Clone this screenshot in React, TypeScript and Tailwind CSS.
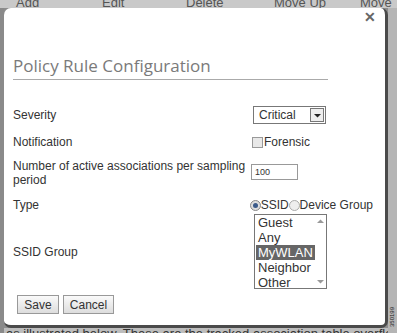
import React from "react";

// ポリシールール設定ダイアログ

const font = { fontFamily: "Tahoma, 'Liberation Sans', Arial, sans-serif" };

function Arrow({ up, color = "#999" }: { up: boolean; color?: string }) {
    return (
        <svg width="7" height="5" viewBox="0 0 7 5">
            <path d={up ? "M0 4 L3.5 0.5 L7 4 Z" : "M0 1 L3.5 4.5 L7 1 Z"} fill={color} />
        </svg>
    );
}

export default function App() {
    const groups = ["Guest", "Any", "MyWLAN", "Neighbor", "Other"];
    return (
        <div className="w-[397px] h-[333px] overflow-hidden bg-[#8d8d8d] flex flex-col" style={font}>
            <div className="h-[8px] bg-[#c9c9c9] flex text-[13px] leading-[10px] text-[#555] overflow-hidden items-end whitespace-nowrap">
                <span className="pl-[16px] w-[70px]">Add</span>
                <span className="w-[90px] pl-[32px]">Edit</span>
                <span className="w-[88px] pl-[26px]">Delete</span>
                <span className="w-[92px] pl-[26px]">Move Up</span>
                <span className="pl-[20px]">Move</span>
            </div>
            <div className="flex-1 flex min-h-0">
                <div className="w-[4px] bg-[#8a8a8a]" />
                <div className="w-[384px] flex flex-col">
                    <div className="h-[320px] bg-white rounded-[7px] border-r-[3px] border-b-[3px] border-[#4a4a4a] flex flex-col pl-[9px] pr-[12px] text-[12px] text-[#333] whitespace-nowrap">
                        <div className="flex justify-end pt-[1px] -mr-[3px]">
                            <span className="text-[14px] font-bold text-[#666] leading-[16px]">✕</span>
                        </div>
                        <div className="mt-[30px] w-[315px] border-b border-[#aaa] pb-[2px] text-[17px] text-[#7a7a7a] leading-[22px]" style={{ fontFamily: "'Open Sans', 'Noto Sans', sans-serif" }}>
                            Policy Rule Configuration
                        </div>
                        <div className="mt-[26px] flex items-center h-[18px]">
                            <span className="w-[240px]">Severity</span>
                            <div className="flex items-center border border-[#777] h-[18px] w-[73px]">
                                <span className="flex-1 pl-[5px]">Critical</span>
                                <span className="w-[14px] h-[14px] mr-[1px] border border-[#777] bg-[#eee] flex items-center justify-center">
                                    <Arrow up={false} color="#222" />
                                </span>
                            </div>
                        </div>
                        <div className="mt-[9px] flex items-center h-[18px]">
                            <span className="w-[239px]">Notification</span>
                            <span className="w-[11px] h-[11px] border border-[#999] bg-[#e8e8e8]" />
                            <span className="pl-[1px]">Forensic</span>
                        </div>
                        <div className="mt-[8px] flex items-start">
                            <span className="w-[238px] leading-[14px] whitespace-normal">Number of active associations per sampling period</span>
                            <span className="mt-[5px] w-[47px] h-[16px] border border-[#999] text-[9px] leading-[14px] pl-[3px]">100</span>
                        </div>
                        <div className="mt-[9px] flex items-center h-[18px]">
                            <span className="w-[240px]">Type</span>
                            <span className="w-[11px] h-[11px] rounded-full border border-[#888] bg-[#ddd] flex items-center justify-center">
                                <span className="w-[5px] h-[5px] rounded-full bg-[#3a5a8a]" />
                            </span>
                            <span>SSID</span>
                            <span className="w-[11px] h-[11px] rounded-full border border-[#aaa] bg-[#eee]" />
                            <span>Device Group</span>
                        </div>
                        <div className="flex items-center">
                            <span className="w-[241px]">SSID Group</span>
                            <div className="w-[73px] h-[75px] border border-[#777] flex">
                                <div className="flex-1 flex flex-col text-[13px] leading-[15px] pl-[1px]">
                                    {groups.map((g) => (
                                        <span key={g} className={g === "MyWLAN" ? "bg-[#666] text-white px-[2px]" : "px-[2px]"}>{g}</span>
                                    ))}
                                </div>
                                <div className="w-[15px] flex flex-col justify-between items-center py-[4px]">
                                    <Arrow up />
                                    <Arrow up={false} />
                                </div>
                            </div>
                        </div>
                        <div className="mt-[6px] flex gap-[4px] pl-[4px]">
                            <button className="h-[19px] w-[42px] border border-[#999] bg-gradient-to-b from-[#fafafa] to-[#ddd] text-[12px] text-[#333]">Save</button>
                            <button className="h-[19px] w-[51px] border border-[#999] bg-gradient-to-b from-[#fafafa] to-[#ddd] text-[12px] text-[#333]">Cancel</button>
                        </div>
                    </div>
                    <div className="flex-1 overflow-hidden bg-[#bdbdbd] text-[13px] leading-[12px] text-[#333] whitespace-nowrap pl-[2px]">
                        as illustrated below. These are the tracked association table overflows
                    </div>
                </div>
                <div className="flex-1 bg-[#b5b5b5] flex items-end justify-center pb-[6px]">
                    <span className="text-[6px] text-[#222] [writing-mode:vertical-rl] rotate-180">350199</span>
                </div>
            </div>
        </div>
    );
}
